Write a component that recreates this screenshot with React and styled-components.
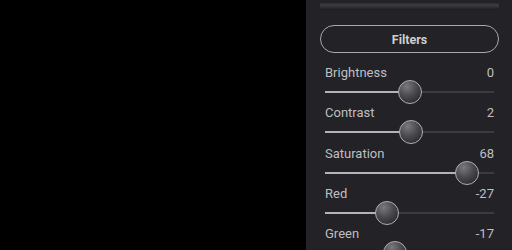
import React from "react"
import styled, { createGlobalStyle } from "styled-components"

const GlobalStyle = createGlobalStyle`
  html, body {
    margin: 0;
    padding: 0;
    background: #000;
    font-family: Roboto, "Liberation Sans", sans-serif;
  }
  * { box-sizing: border-box; }
`

const filters = [
  { name: "Brightness", value: 0 },
  { name: "Contrast", value: 2 },
  { name: "Saturation", value: 68 },
  { name: "Red", value: -27 },
  { name: "Green", value: -17 },
]

function Slider({ value }) {
  const pct = ((value + 100) / 200) * 100
  return (
    <Track>
      <Fill style={{ width: `${pct}%` }} />
      <Thumb style={{ left: `${pct}%` }} />
    </Track>
  )
}

export default function App() {
  return (
    <>
      <GlobalStyle />
      <Screen>
        <Preview />
        <Panel>
          <TopBar />
          <FiltersButton>Filters</FiltersButton>
          <List>
            {filters.map((f) => (
              <Row key={f.name}>
                <LabelLine>
                  <span>{f.name}</span>
                  <span>{f.value}</span>
                </LabelLine>
                <Slider value={f.value} />
              </Row>
            ))}
          </List>
        </Panel>
      </Screen>
    </>
  )
}

const Screen = styled.div`
  width: 512px;
  height: 250px;
  display: flex;
  overflow: hidden;
`
const Preview = styled.div`
  width: 306px;
  flex-shrink: 0;
  background: #000;
`
const Panel = styled.div`
  flex: 1;
  background: #232226;
  padding: 0 13px 0 14px;
  display: flex;
  flex-direction: column;
  & > * {
    flex-shrink: 0;
  }
`
const TopBar = styled.div`
  margin-top: 2px;
  height: 8px;
  border-radius: 3px;
  background: linear-gradient(180deg, #1e1e22 0%, #3e3e42 35%, #333337 60%, #1c1c20 100%);
`
const FiltersButton = styled.div`
  margin-top: 15px;
  height: 28px;
  border: 1.5px solid #a9a9ab;
  border-radius: 14px;
  display: flex;
  align-items: center;
  justify-content: center;
  color: #cfcfd1;
  font-size: 12.5px;
  font-weight: 700;
`
const List = styled.div`
  margin-top: 11px;
  padding: 0 5px;
  display: flex;
  flex-direction: column;
`
const Row = styled.div`
  height: 40.25px;
  flex-shrink: 0;
  display: flex;
  flex-direction: column;
`
const LabelLine = styled.div`
  height: 17px;
  line-height: 17px;
  display: flex;
  justify-content: space-between;
  color: #bfbfc2;
  font-size: 13px;
`
const Track = styled.div`
  position: relative;
  margin-top: 10px;
  height: 2px;
  background: #3c3c40;
`
const Fill = styled.div`
  height: 100%;
  background: #b4b4b6;
`
const Thumb = styled.div`
  position: absolute;
  top: 50%;
  width: 24px;
  height: 24px;
  transform: translate(-50%, -50%);
  border-radius: 50%;
  border: 1.5px solid #b0b0b2;
  background: radial-gradient(circle at 35% 25%, #7a7a7e 0%, #4a4a4e 45%, #1e1e22 100%);
`
